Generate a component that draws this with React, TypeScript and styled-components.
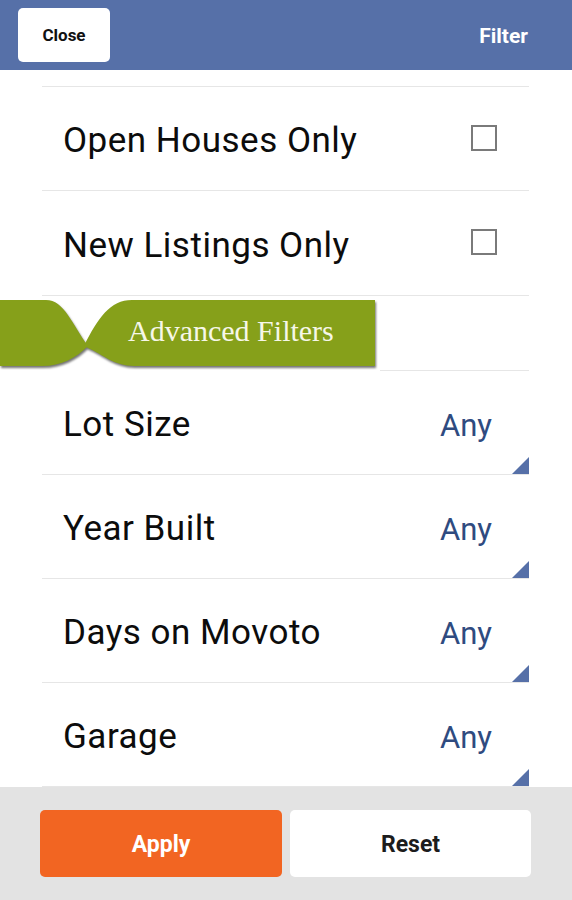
import styled, { createGlobalStyle } from "styled-components";

const GlobalStyle = createGlobalStyle`
  html, body {
    margin: 0;
    padding: 0;
    background: #ffffff;
  }
  body {
    font-family: Roboto, "Noto Sans", sans-serif;
  }
`;

const Screen = styled.div`
  width: 572px;
  height: 900px;
  display: flex;
  flex-direction: column;
  overflow: hidden;
  background: #ffffff;
`;

const Header = styled.header`
  height: 70px;
  flex-shrink: 0;
  background: #5670a8;
  display: flex;
  align-items: center;
  justify-content: space-between;
  padding: 0 44px 0 18px;
  box-sizing: border-box;
`;

const CloseButton = styled.button`
  width: 92px;
  height: 54px;
  margin-top: -1px;
  border: none;
  border-radius: 5px;
  background: #ffffff;
  color: #111111;
  font-family: Roboto, sans-serif;
  font-weight: 700;
  font-size: 17px;
`;

const Title = styled.span`
  color: #ffffff;
  font-weight: 700;
  font-size: 21px;
  margin-top: 2px;
`;

const List = styled.div`
  flex: 1;
  overflow: hidden;
  padding-top: 16px;
`;

const Row = styled.div<{ $height?: number; $first?: boolean }>`
  position: relative;
  height: ${(p) => p.$height ?? 103}px;
  margin: 0 43px 0 42px;
  border-top: ${(p) => (p.$first ? "1px solid #e6e6e6" : "none")};
  border-bottom: 1px solid #e6e6e6;
  display: flex;
  align-items: center;
  justify-content: space-between;
  padding: 0 32px 0 21px;
`;

const Label = styled.span`
  font-size: 35px;
  color: #0c0c0c;
  letter-spacing: 0.5px;
  margin-top: 4px;
`;

const Checkbox = styled.span`
  width: 22px;
  height: 22px;
  border: 2px solid #7a7a7a;
  margin-top: -2px;
`;

const Value = styled.span`
  font-size: 31px;
  color: #2f4b80;
  margin-right: 5px;
  margin-top: 5px;
`;

const Corner = styled.span`
  position: absolute;
  right: 0;
  bottom: 0;
  width: 0;
  height: 0;
  border-style: solid;
  border-width: 0 0 17px 17px;
  border-color: transparent transparent #5670a8 transparent;
`;

const RibbonRow = styled.div`
  height: 75px;
  display: flex;
  align-items: stretch;
`;

const RibbonLine = styled.div`
  flex: 1;
  margin: 0 43px 0 0;
  border-bottom: 1px solid #e6e6e6;
  height: 74px;
`;

const Ribbon = styled.div`
  position: relative;
  width: 380px;
  height: 75px;
  flex-shrink: 0;
  display: flex;
  align-items: center;
`;

const RibbonShape = styled.svg`
  position: absolute;
  left: 0;
  top: 0;
  filter: drop-shadow(1px 2px 1px rgba(0, 0, 0, 0.55));
`;

const RibbonText = styled.span`
  position: relative;
  padding-left: 128px;
  margin-top: -6px;
  font-family: "Liberation Serif", "DejaVu Serif", serif;
  font-size: 30px;
  color: #f6f7e8;
`;

const Footer = styled.footer`
  height: 113px;
  flex-shrink: 0;
  background: #e3e3e3;
  display: grid;
  grid-template-columns: 242px 241px;
  column-gap: 8px;
  padding: 23px 0 0 40px;
  box-sizing: border-box;
  align-content: start;
`;

const FooterButton = styled.button<{ $primary?: boolean }>`
  height: 67px;
  border: none;
  border-radius: 5px;
  background: ${(p) => (p.$primary ? "#f26522" : "#ffffff")};
  color: ${(p) => (p.$primary ? "#ffffff" : "#1c1c1c")};
  font-family: Roboto, sans-serif;
  font-weight: 700;
  font-size: 23px;
  padding-top: 3px;
`;

const checkRows = ["Open Houses Only", "New Listings Only"];
const pickRows = ["Lot Size", "Year Built", "Days on Movoto", "Garage"];

function AdvancedBanner() {
  return (
    <RibbonRow>
      <Ribbon>
        <RibbonShape width="380" height="75" viewBox="0 0 380 75">
          <path
            d="M0 4 H46 C64 4 72 28 88 50 C76 62 62 70 42 70 H0 Z"
            fill="#86a01a"
          />
          <path
            d="M84 50 C98 22 110 4 132 4 H375 V70 H134 C114 70 102 58 90 53 Z"
            fill="#86a01a"
          />
        </RibbonShape>
        <RibbonText>Advanced Filters</RibbonText>
      </Ribbon>
      <RibbonLine />
    </RibbonRow>
  );
}

export default function App() {
  return (
    <>
      <GlobalStyle />
      <Screen>
        <Header>
          <CloseButton>Close</CloseButton>
          <Title>Filter</Title>
        </Header>

        <List>
          {checkRows.map((label, i) => (
            <Row key={label} $first={i === 0} $height={i === 0 ? 103 : 104}>
              <Label>{label}</Label>
              <Checkbox />
            </Row>
          ))}

          <AdvancedBanner />

          {pickRows.map((label) => (
            <Row key={label}>
              <Label>{label}</Label>
              <Value>Any</Value>
              <Corner />
            </Row>
          ))}
        </List>

        <Footer>
          <FooterButton $primary>Apply</FooterButton>
          <FooterButton>Reset</FooterButton>
        </Footer>
      </Screen>
    </>
  );
}
